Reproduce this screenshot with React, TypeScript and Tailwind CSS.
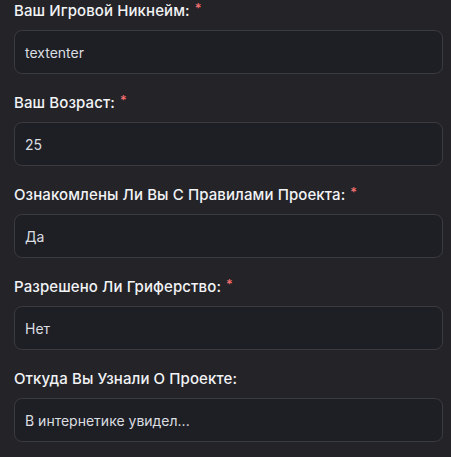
import React from "react";

const fields = [
  { label: "Ваш Игровой Никнейм:", value: "textenter", required: true },
  { label: "Ваш Возраст:", value: "25", required: true },
  { label: "Ознакомлены Ли Вы С Правилами Проекта:", value: "Да", required: true },
  { label: "Разрешено Ли Гриферство:", value: "Нет", required: true },
  { label: "Откуда Вы Узнали О Проекте:", value: "В интернетике увидел...", required: false },
];

export default function App() {
  return (
    <div className="min-h-screen bg-[#232328] pl-[14px] pr-[8px] font-['Inter','Noto_Sans',sans-serif]">
      {fields.map((f) => (
        <div key={f.label} className="pb-[18px]">
          <div className="h-[22px] flex items-center text-[15px] font-medium tracking-[0.1px] text-[#f2f3f5]">
            {f.label}
            {f.required && (
              <span className="relative -top-[3px] ml-[5px] text-[13px] leading-none text-[#f87171]">*</span>
            )}
          </div>
          <div className="mt-2 h-[44px] flex items-center rounded-lg border border-[#3a3b41] bg-[#1e1f24] px-[10px] text-[14px] text-[#dbdee1]">
            {f.value}
          </div>
        </div>
      ))}
    </div>
  );
}
